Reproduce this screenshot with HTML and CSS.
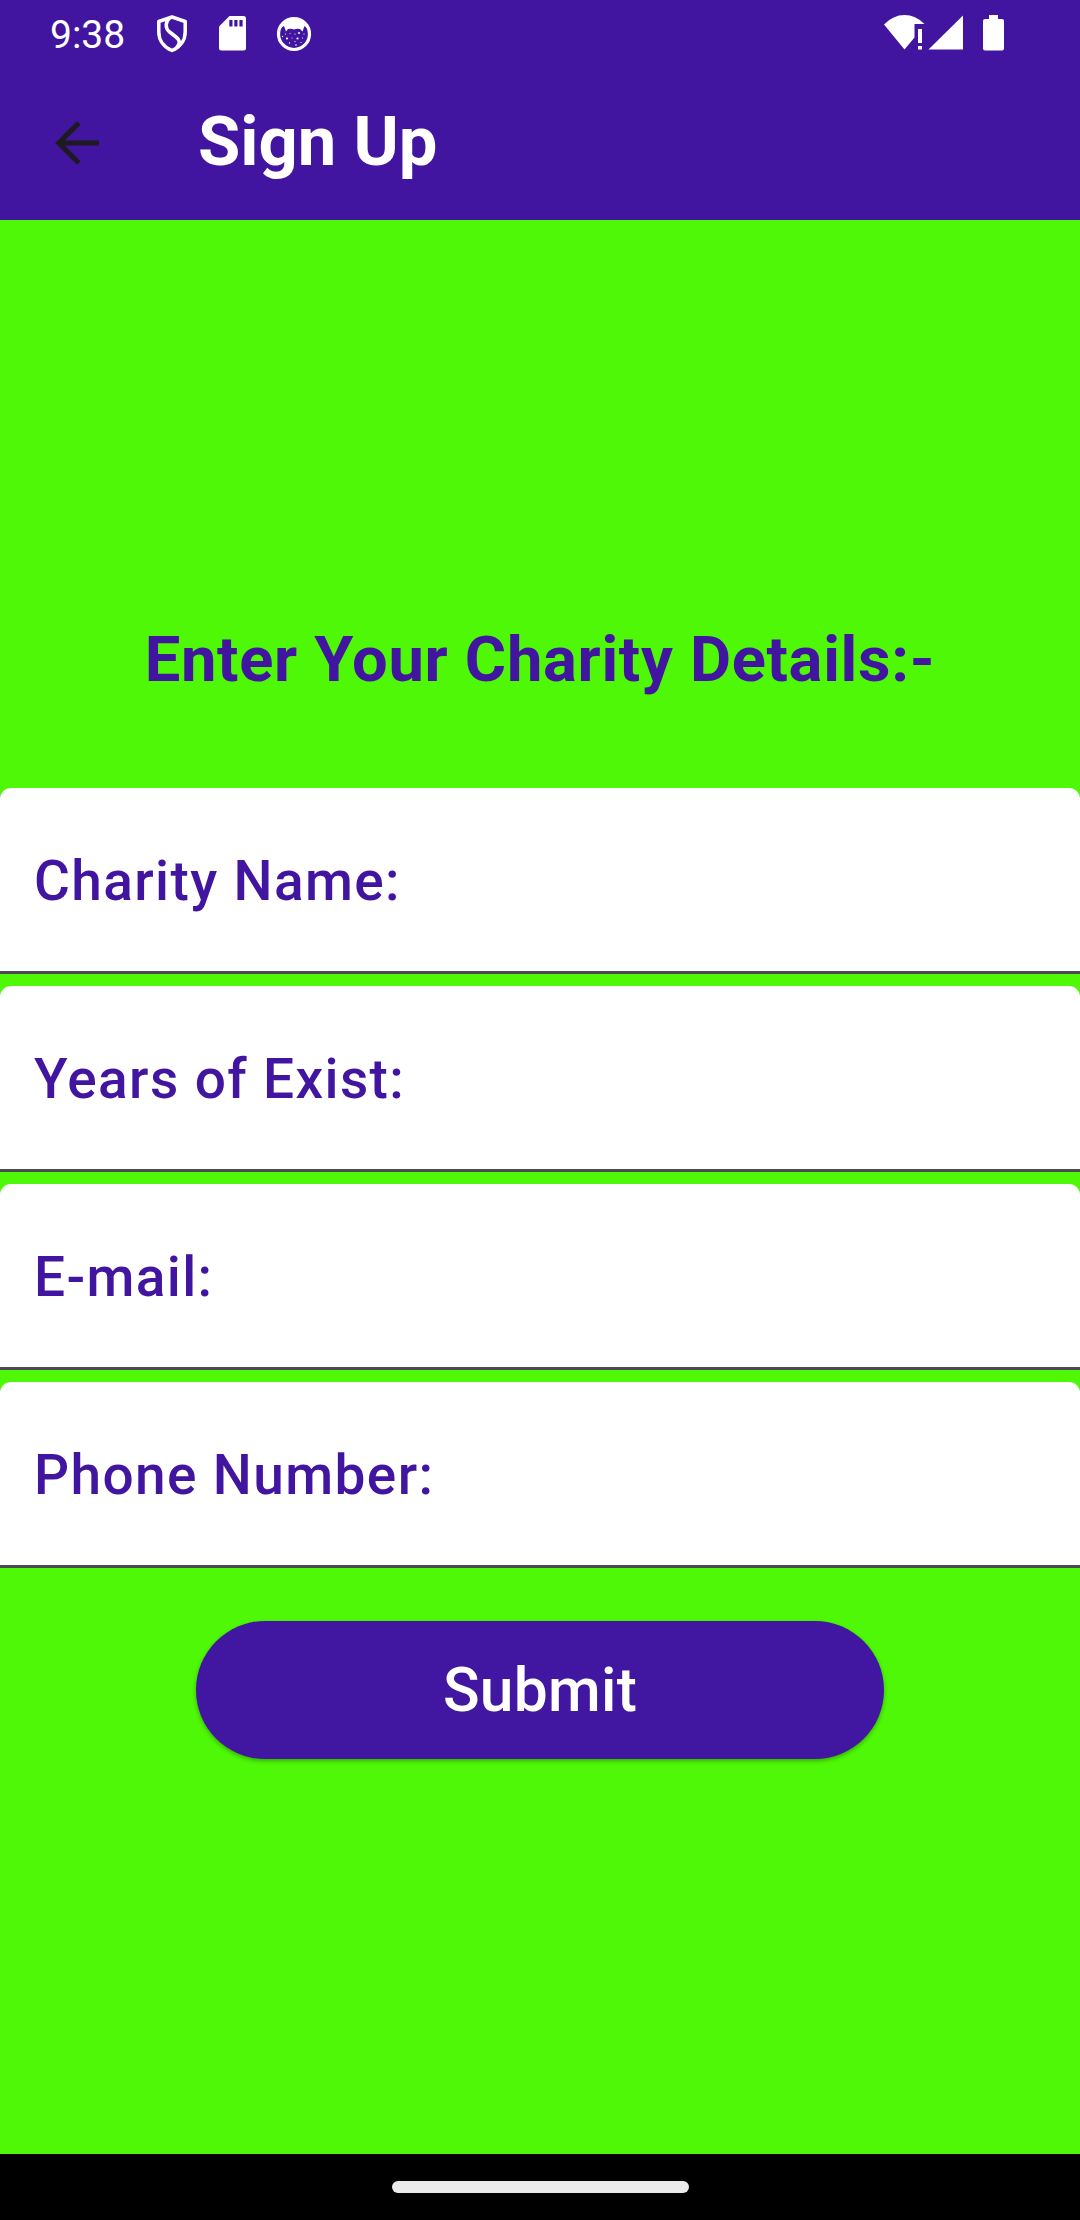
FILE: index.html
```html
<!DOCTYPE html>
<html lang="en">
<head>
<meta charset="utf-8">
<title>Sign Up</title>
<link rel="stylesheet" href="styles.css">
</head>
<body>
<div class="screen">
  <div class="status-bar">
    <span class="clock">9:38</span>
    <svg class="shield" viewBox="0 0 32 38" fill="none" stroke="#fff" stroke-width="3.500" stroke-linejoin="round">
      <path d="M16 2 L29.200 6.500 V17 C29.200 26 23.500 32.500 16 35.500 C8.500 32.500 2.800 26 2.800 17 V6.500 Z"/>
      <path d="M13.500 3 C9.500 7 9 13 13 16.500 L20 22 C24.500 25.500 24 29 20.500 33"/>
    </svg>
    <svg class="sd-card" viewBox="0 0 27 35">
      <path fill="#fff" d="M10.500 0 H24.500 Q27 0 27 2.500 V32 Q27 34.500 24.500 34.500 H2.500 Q0 34.500 0 32 V10.500 Z"/>
      <path fill="#4115a0" d="M10.300 4h3.200v6.500h-3.200z M15.300 4h3.200v6.500h-3.200z M20.400 4h3.200v6.500h-3.200z"/>
    </svg>
    <svg class="cat" viewBox="0 0 36 36">
      <circle cx="18" cy="18" r="15.500" fill="none" stroke="#fff" stroke-width="3.200"/>
      <path fill="#fff" d="M5 10 Q10 2 18 2 T31 10 L29.500 11 L28.500 10 L26.500 15.500 L24 13 Q21 12.300 18 13.500 Q15 12.300 12 13 L10 15.500 L8 10 L6.500 11 Z"/>
      <g fill="#fff">
        <circle cx="6.500" cy="20.500" r=".7"/><circle cx="9.500" cy="18" r=".6"/><circle cx="14" cy="17.500" r=".5"/>
        <circle cx="19" cy="18" r=".6"/><circle cx="23" cy="17" r="1"/><circle cx="28" cy="18" r=".6"/>
        <circle cx="11" cy="22.500" r="1.100"/><circle cx="16" cy="22" r=".5"/><circle cx="21.500" cy="22.500" r="1.100"/>
        <circle cx="26.500" cy="22" r=".6"/><circle cx="13.500" cy="27" r=".7"/>
        <circle cx="19" cy="25.500" r=".6"/><circle cx="20" cy="29" r=".8"/><circle cx="25" cy="26.500" r=".6"/>
      </g>
    </svg>
    <svg class="signals" viewBox="0 0 122 36">
      <g fill="#fff">
        <path d="M0 9.500 Q9 0 20.500 0 Q31.500 0 40.500 9 H30.500 V22.500 L20.500 34.500 Z"/>
        <path d="M34 14h4v14h-4z M34 31h4v3.500h-4z"/>
        <path d="M79 .5 V34.500 H44.500 Z"/>
        <path d="M105 0h9v4h4q2 0 2 2v27.500q0 2-2 2h-17q-2 0-2-2V6q0-2 2-2h4z"/>
      </g>
    </svg>
  </div>
  <header class="app-bar">
    <svg class="back" viewBox="0 0 44 44" fill="none" stroke="#1d1b20" stroke-width="5.200">
      <path d="M44 22 H4 M23.800 2 L3.800 22 L23.800 42"/>
    </svg>
    <h1 class="title">Sign Up</h1>
  </header>
  <main class="content">
    <h2 class="heading">Enter Your Charity Details:-</h2>
    <div class="fields">
      <div class="field">Charity Name:</div>
      <div class="field">Years of Exist:</div>
      <div class="field">E-mail:</div>
      <div class="field">Phone Number:</div>
    </div>
    <button class="submit" type="button">Submit</button>
  </main>
  <footer class="nav-bar"><div class="handle"></div></footer>
</div>
</body>
</html>
```
FILE: styles.css
```css
* { box-sizing: border-box; }
body { margin: 0; font-family: Roboto, sans-serif; }
.screen {
  width: 1080px;
  height: 2220px;
  display: flex;
  flex-direction: column;
  background: #4ef806;
}
.status-bar {
  height: 66px;
  flex: none;
  display: flex;
  align-items: flex-start;
  background: #4115a0;
  color: #fff;
}
.clock {
  width: 105px;
  margin-left: 50px;
  padding-top: 12px;
  font-size: 39px;
  line-height: 46px;
}
.shield { width: 32px; height: 38px; margin: 15px 0 0 .5px; }
.sd-card { width: 27px; height: 35px; margin: 16px 0 0 31.500px; }
.cat { width: 36px; height: 36px; margin: 15.500px 0 0 29.500px; }
.signals { width: 122px; height: 36px; margin: 15px 74px 0 auto; }
.app-bar {
  height: 154px;
  flex: none;
  display: flex;
  align-items: flex-start;
  background: #4115a0;
}
.back { width: 44px; height: 44px; margin: 55px 0 0 55px; }
.title {
  margin: 36px 0 0 99px;
  color: #fff;
  font-size: 68.750px;
  line-height: 80px;
  font-weight: 700;
}
.content {
  flex: 1;
  display: flex;
  flex-direction: column;
  align-items: center;
}
.heading {
  margin: 402px 0 91px;
  color: #4115a0;
  font-size: 63.250px;
  line-height: 75px;
  font-weight: 700;
  letter-spacing: .6875px;
}
.fields {
  width: 100%;
  display: flex;
  flex-direction: column;
  gap: 12px;
}
.field {
  height: 186px;
  padding: 60px 34px 0;
  border-radius: 11px 11px 0 0;
  background: linear-gradient(#4e4a54, #4e4a54) bottom / 100% 3px no-repeat #fff;
  color: #4115a0;
  font-size: 55px;
  line-height: 66px;
  font-weight: 500;
  letter-spacing: 1.375px;
}
.submit {
  width: 687.500px;
  height: 137.500px;
  margin-top: 53.250px;
  padding: 1px 0 0;
  border: 0;
  border-radius: 69px;
  background: #4117a2;
  box-shadow: 0 2px 4px rgba(0, 0, 0, .3);
  color: #fff;
  font: 500 60.500px/72px Roboto, sans-serif;
  letter-spacing: .275px;
}
.nav-bar {
  height: 66px;
  flex: none;
  display: flex;
  justify-content: center;
  padding-top: 27px;
  background: #000;
}
.handle { width: 297px; height: 12px; border-radius: 6px; background: #ebebeb; }
```
